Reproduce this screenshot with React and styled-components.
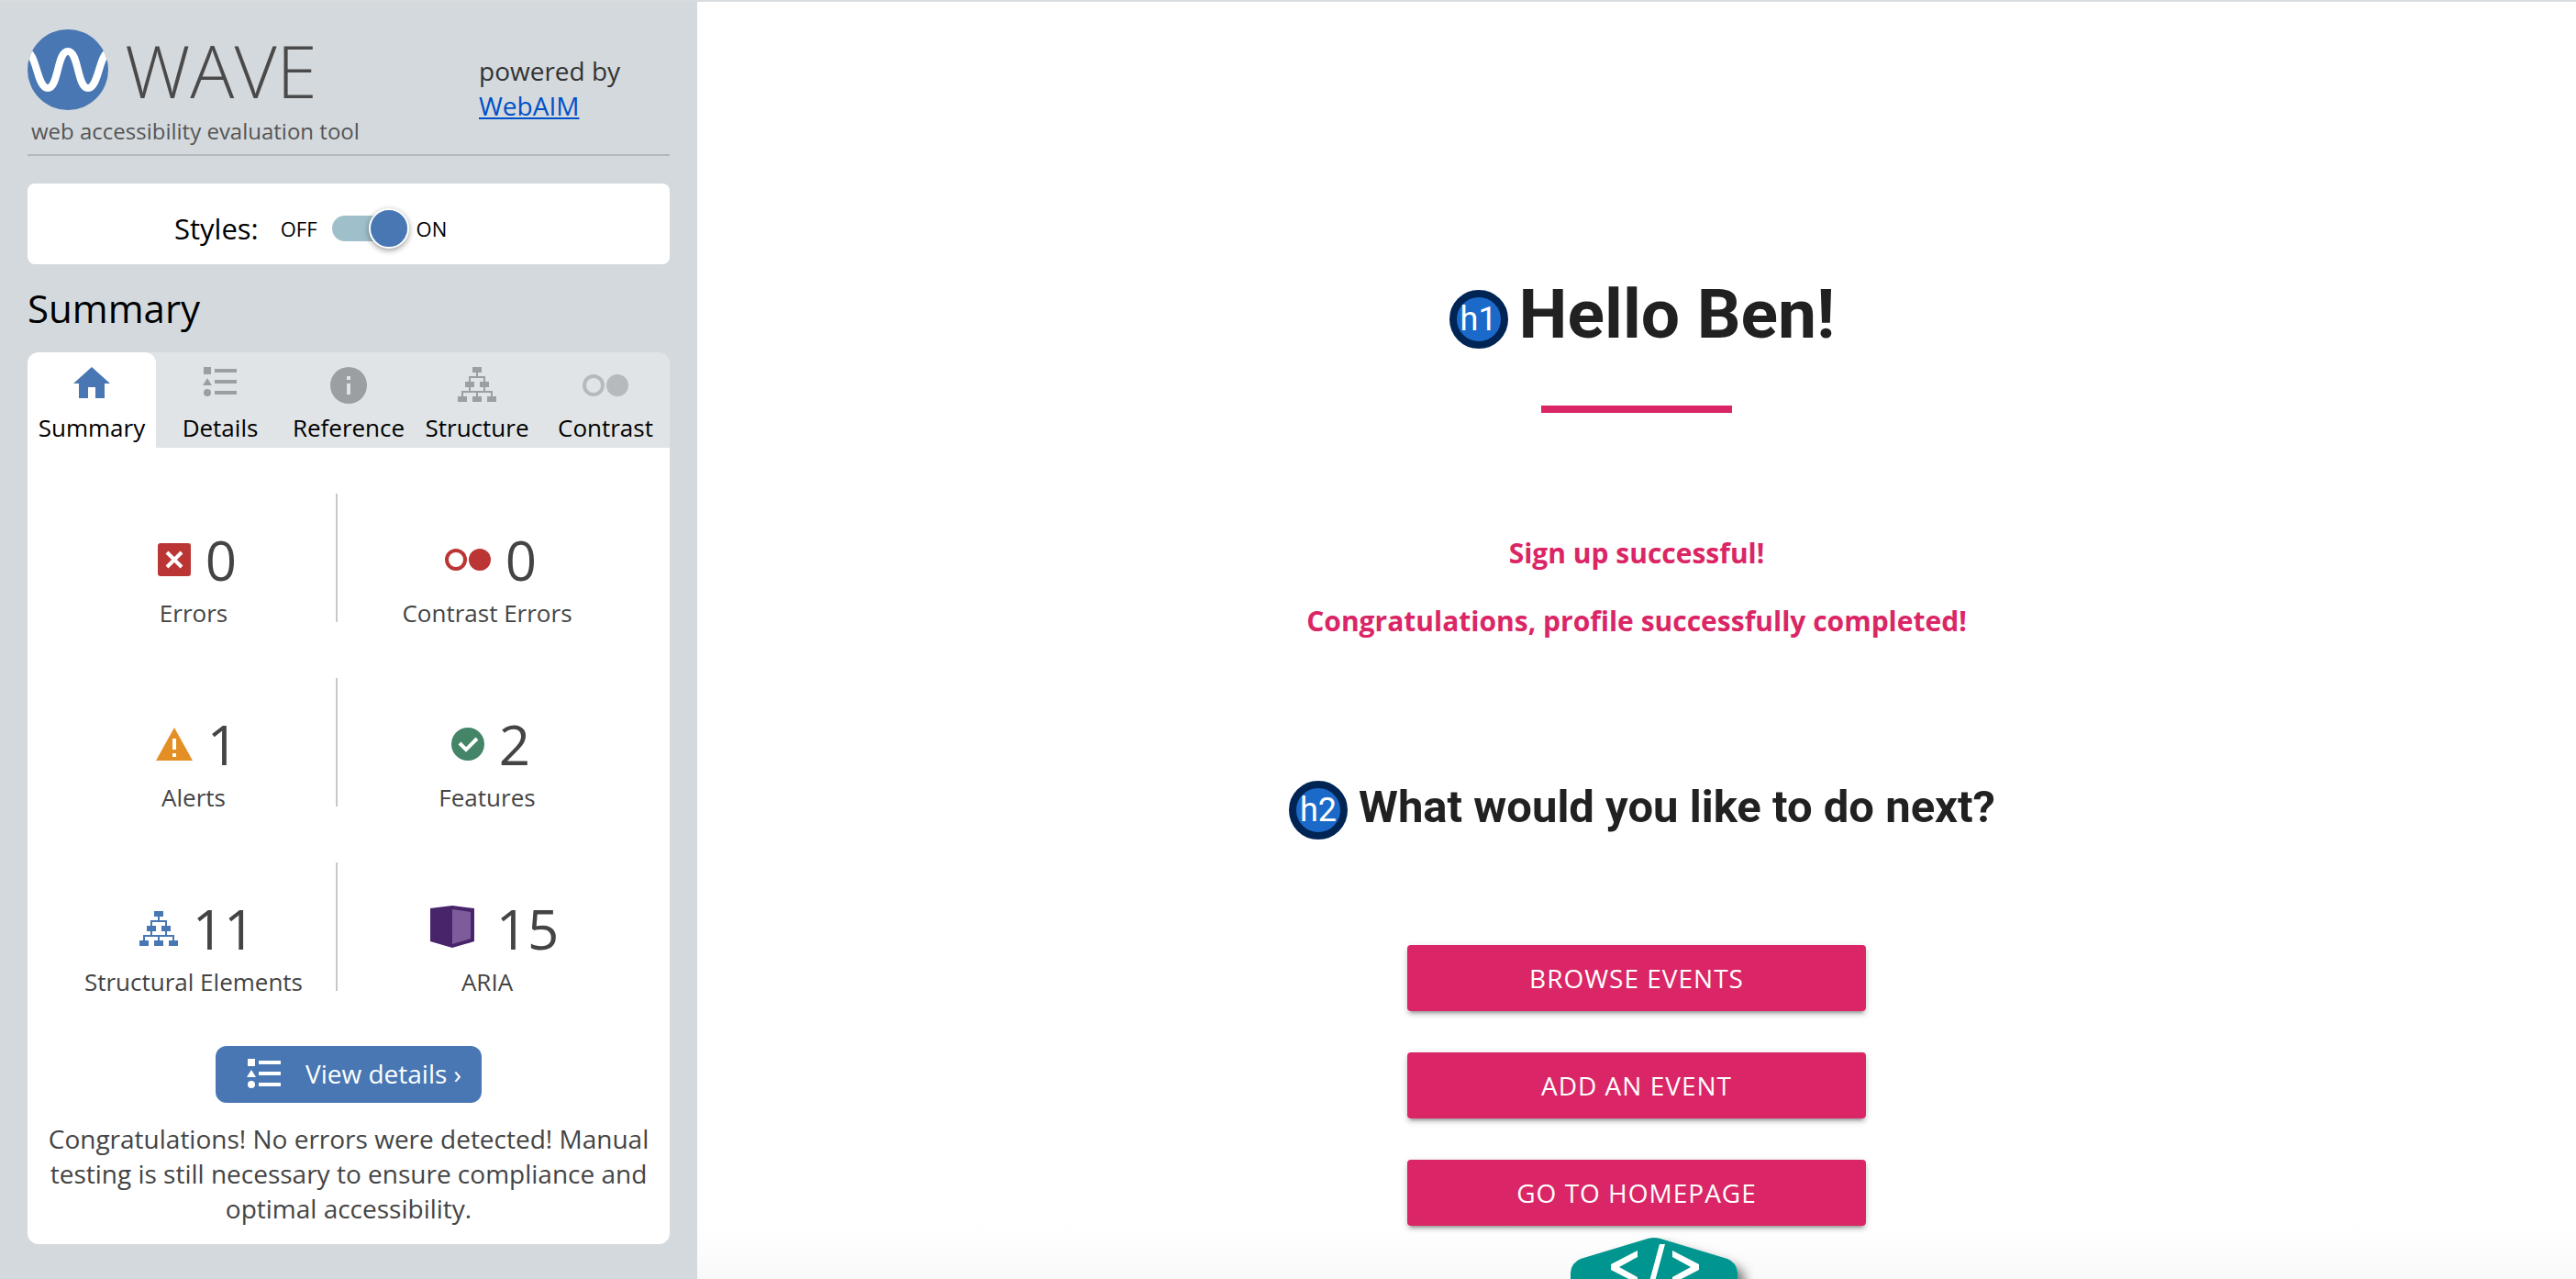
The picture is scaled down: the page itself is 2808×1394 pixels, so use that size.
import React from "react";
import styled, { createGlobalStyle } from "styled-components";

const BLUE = "#4877b3";
const PINK = "#da2666";

const GlobalStyle = createGlobalStyle`
  *, *::before, *::after { box-sizing: border-box; }
  html, body { margin: 0; }
  body {
    font-family: "Open Sans", "Noto Sans", sans-serif;
    background: #fff;
    color: #444;
  }
  h1, h2, p, ul { margin: 0; padding: 0; }
  button { font-family: inherit; cursor: pointer; }
`;

const Layout = styled.div`
  display: flex;
  height: 100vh;
  overflow: hidden;
  border-top: 2px solid #d9dcdf;
`;

const Sidebar = styled.aside`
  flex: 0 0 760px;
  padding: 30px;
  background: #d4d9dd;
`;

const Header = styled.header`
  display: flex;
  justify-content: space-between;
  height: 138px;
  border-bottom: 2px solid #b3b8bc;
`;

const Brand = styled.div`
  display: flex;
  flex-direction: column;
`;

const BrandRow = styled.div`
  display: flex;
  align-items: center;
  gap: 18px;
  height: 88px;
`;

const Wordmark = styled.span`
  font-size: 80px;
  font-weight: 300;
  line-height: 88px;
  color: #4a4a4a;
`;

const Tagline = styled.span`
  padding-left: 4px;
  font-size: 24px;
  line-height: 46px;
  color: #555;
`;

const Powered = styled.p`
  width: 208px;
  padding-top: 26px;
  font-size: 28px;
  line-height: 38px;
  color: #333;

  a { display: block; color: #0050c8; text-decoration: underline; }
`;

const StylesCard = styled.div`
  display: flex;
  align-items: center;
  height: 88px;
  margin-top: 30px;
  padding: 10px 160px 0;
  border-radius: 8px;
  background: #fff;
  color: #000;
`;

const StylesLabel = styled.span`
  font-size: 31px;
  line-height: 40px;
  margin-right: 24px;
`;

const SwitchLabel = styled.label`
  display: flex;
  align-items: center;
  gap: 8px;
  font-size: 22px;
  line-height: 40px;
`;

const Switch = styled.input`
  appearance: none;
  display: flex;
  align-items: center;
  justify-content: ${(p) => (p.defaultChecked ? "flex-end" : "flex-start")};
  width: 84px;
  height: 28px;
  margin: 0 0 0 8px;
  border-radius: 14px;
  background: linear-gradient(90deg, #9fc0ca 64px, transparent 64px);

  &::before {
    content: "";
    flex: none;
    width: 44px;
    height: 44px;
    border: 2px solid #fff;
    border-radius: 50%;
    background: ${BLUE};
    box-shadow: 0 2px 6px rgba(0, 0, 0, 0.4);
  }
`;

const PanelTitle = styled.h2`
  margin: 18px 0;
  font-size: 42px;
  font-weight: 400;
  line-height: 60px;
  color: #000;
`;

const Tabs = styled.div`
  display: grid;
  grid-template-columns: repeat(5, 1fr);
  height: 104px;
  border-radius: 12px 12px 0 0;
  background: #e0e4e6;
`;

const Tab = styled.button`
  display: flex;
  flex-direction: column;
  align-items: center;
  padding: 16px 0 0;
  border: 0;
  border-radius: 12px 12px 0 0;
  background: ${(p) => (p.$active ? "#fff" : "transparent")};
  font-size: 26px;
  line-height: 36px;
  color: #000;
`;

const TabIcon = styled.span`
  display: flex;
  justify-content: center;
  height: 48px;
  opacity: ${(p) => (p.$dim ? 0.6 : 1)};
  color: ${(p) => (p.$active ? BLUE : "#9b9fa1")};
`;

const Panel = styled.section`
  display: flex;
  flex-direction: column;
  align-items: center;
  height: 868px;
  padding: 50px 20px 0;
  border-radius: 0 0 12px 12px;
  background: #fff;
`;

const Stats = styled.ul`
  display: grid;
  grid-template-columns: 312px 328px;
  row-gap: 61px;
  && { margin-right: 12px; }
  list-style: none;
`;

const Stat = styled.li`
  display: flex;
  flex-direction: column;
  align-items: center;
  justify-content: flex-end;
  height: 140px;
  border-left: 2px solid ${(p) => (p.$divided ? "#c6c9cb" : "transparent")};
`;

const StatTop = styled.span`
  display: flex;
  align-items: center;
  gap: 16px;
  height: 96px;
  padding-left: 8px;
  font-size: 60px;
  line-height: 80px;
`;

const StatIcon = styled.span`
  display: flex;
`;

const StatLabel = styled.span`
  font-size: 26px;
  line-height: 20px;
`;

const DetailsButton = styled.button`
  display: flex;
  align-items: center;
  gap: 26px;
  height: 62px;
  margin-top: 60px;
  padding: 0 22px 2px 34px;
  border: 0;
  border-radius: 12px;
  background: ${BLUE};
  color: #fff;
  font-size: 28px;
  line-height: 38px;
`;

const Message = styled.p`
  && { margin-top: 20px; }
  font-size: 28px;
  line-height: 38px;
  text-align: center;
`;

const Main = styled.main`
  position: relative;
  flex: 1;
  display: flex;
  flex-direction: column;
  align-items: center;
  padding-top: 288px;
  overflow: hidden;
  background: linear-gradient(#fff calc(100% - 60px), #f9f9f9);
`;

const HeadingBadge = styled.span`
  display: flex;
  align-items: center;
  justify-content: center;
  width: 64px;
  height: 64px;
  border: 8px solid #002554;
  border-radius: 50%;
  background: #1b6ac9;
  color: #fff;
  font-size: 36px;
  font-weight: 400;
  line-height: 48px;
`;

const Title = styled.h1`
  display: flex;
  align-items: center;
  gap: 12px;
  padding-left: 12px;
  font-family: Roboto, sans-serif;
  font-size: 75px;
  font-weight: 700;
  line-height: 104px;
  color: #212121;

  ${HeadingBadge} { margin-top: 12px; }
`;

const Subtitle = styled(Title).attrs({ as: "h2" })`
  margin-top: 144px;
  font-size: 49px;
  line-height: 76px;

  ${HeadingBadge} { margin-top: 6px; }
`;

const Rule = styled.span`
  width: 208px;
  height: 8px;
  margin: 48px 0 132px;
  background: ${PINK};
`;

const Notice = styled.p`
  font-size: 30px;
  font-weight: 700;
  line-height: 42px;
  color: ${PINK};

  & + & { margin-top: 32px; }
`;

const Actions = styled.div`
  display: grid;
  gap: 45px;
  width: 500px;
  margin-top: 112px;
`;

const Action = styled.button`
  height: 72px;
  border: 0;
  border-radius: 4px;
  background: ${PINK};
  box-shadow: 0 6px 2px -4px rgba(0, 0, 0, 0.2), 0 4px 4px rgba(0, 0, 0, 0.14),
    0 2px 10px rgba(0, 0, 0, 0.12);
  color: #fff;
  font-size: 28px;
  letter-spacing: 1px;
  line-height: 44px;
  text-transform: uppercase;
`;

const CodeTab = styled.button`
  position: absolute;
  left: calc(50% - 72px);
  bottom: 0;
  display: flex;
  width: 200px;
  height: 46px;
  padding: 0;
  border: 0;
  background: none;
`;

const Logo = () => (
  <svg width="88" height="88" viewBox="0 0 88 88" aria-hidden="true">
    <clipPath id="disc"><circle cx="44" cy="44" r="44" /></clipPath>
    <circle cx="44" cy="44" r="44" fill={BLUE} />
    <path clipPath="url(#disc)" d="M-2 24 C10 24 10 64 22 64 C34 64 32 24 44 24 C56 24 54 64 66 64 C78 64 78 24 90 24" fill="none" stroke="#fff" strokeWidth="8" />
  </svg>
);

const HomeIcon = () => (
  <svg width="40" height="34" viewBox="0 0 40 34" fill="currentColor" aria-hidden="true">
    <path d="M20 0 40 18H34V34H24V22H16V34H6V18H0Z" />
  </svg>
);

const ListIcon = () => (
  <svg width="38" height="32" viewBox="0 0 38 32" fill="currentColor" aria-hidden="true">
    <path d="M1 0H9V8H1ZM5 12 10 20H0Z" />
    <circle cx="5" cy="28" r="4" />
    <path d="M13 2H37V6H13ZM13 14H37V18H13ZM13 26H37V30H13Z" />
  </svg>
);

const InfoIcon = () => (
  <svg width="40" height="40" viewBox="0 0 40 40" aria-hidden="true">
    <circle cx="20" cy="20" r="20" fill="currentColor" />
    <path d="M18 10H22V14H18ZM18 18H22V30H18Z" fill="#e0e4e6" />
  </svg>
);

const TreeIcon = () => (
  <svg width="42" height="38" viewBox="0 0 42 38" fill="currentColor" aria-hidden="true">
    <path d="M16 0H26V6H16ZM8 16H18V22H8ZM24 16H34V22H24ZM0 32H10V38H0ZM16 32H26V38H16ZM32 32H42V38H32Z" />
    <path d="M21 5V11M13 17V11H29V17M13 21V27M29 21V27M5 33V27H37V33M21 27V33" fill="none" stroke="currentColor" strokeWidth="2" />
  </svg>
);

const CirclesIcon = () => (
  <svg width="50" height="40" viewBox="0 0 50 40" aria-hidden="true">
    <circle cx="12" cy="20" r="10" fill="none" stroke="currentColor" strokeWidth="4" />
    <circle cx="38" cy="20" r="12" fill="currentColor" />
  </svg>
);

const ErrorIcon = () => (
  <svg width="36" height="36" viewBox="0 0 36 36" aria-hidden="true">
    <rect width="36" height="36" rx="3" fill="#bb3535" />
    <path d="M10 10 26 26M26 10 10 26" stroke="#fff" strokeWidth="4" />
  </svg>
);

const RedCircles = styled.span`
  display: flex;
  color: #bb3535;
`;

const AlertIcon = () => (
  <svg width="40" height="36" viewBox="0 0 40 36" aria-hidden="true">
    <path d="M20 0 40 36H0Z" fill="#e48f26" />
    <path d="M18 12H22V24H18ZM18 28H22V32H18Z" fill="#fff" />
  </svg>
);

const CheckIcon = () => (
  <svg width="36" height="36" viewBox="0 0 36 36" aria-hidden="true">
    <circle cx="18" cy="18" r="18" fill="#448467" />
    <path d="M9 17 16 24 28 12" fill="none" stroke="#fff" strokeWidth="4" />
  </svg>
);

const BlueTree = styled.span`
  display: flex;
  color: ${BLUE};
`;

const AriaIcon = () => (
  <svg width="64" height="50" viewBox="-8 0 64 50" aria-hidden="true">
    <path d="M0 3 24 0 48 3V39L24 46 0 39Z" fill="#48246b" />
    <path d="M24 4 44 7V36L24 42Z" fill="#7e5c9b" />
  </svg>
);

const CodeMark = () => (
  <svg width="200" height="46" viewBox="0 0 200 46" aria-hidden="true">
    <defs>
      <filter id="shade" x="-10%" y="-10%" width="130%" height="130%">
        <feDropShadow dx="8" dy="8" stdDeviation="6" floodColor="#000" floodOpacity="0.5" />
      </filter>
    </defs>
    <path filter="url(#shade)" d="M0 47V39Q1 28 11 24L84 2Q91 0 98 2L171 24Q181 28 182 39V100H0Z" fill="#05968f" />
    <path d="M73 15V22L53 33 73 44V51L44 36V30ZM111 15V22L131 33 111 44V51L140 36V30ZM97 8H103L90 56H84Z" fill="#fff" />
  </svg>
);

const TABS = [
  { name: "Summary", icon: <HomeIcon />, active: true },
  { name: "Details", icon: <ListIcon /> },
  { name: "Reference", icon: <InfoIcon /> },
  { name: "Structure", icon: <TreeIcon /> },
  { name: "Contrast", icon: <CirclesIcon />, dim: true },
];

const STATS = [
  { label: "Errors", count: 0, icon: <ErrorIcon /> },
  { label: "Contrast Errors", count: 0, icon: <RedCircles><CirclesIcon /></RedCircles> },
  { label: "Alerts", count: 1, icon: <AlertIcon /> },
  { label: "Features", count: 2, icon: <CheckIcon /> },
  { label: "Structural Elements", count: 11, icon: <BlueTree><TreeIcon /></BlueTree> },
  { label: "ARIA", count: 15, icon: <AriaIcon /> },
];

export default function App() {
  return (
    <>
      <GlobalStyle />
      <Layout>
        <Sidebar>
          <Header>
            <Brand>
              <BrandRow>
                <Logo />
                <Wordmark>WAVE</Wordmark>
              </BrandRow>
              <Tagline>web accessibility evaluation tool</Tagline>
            </Brand>
            <Powered>
              powered by <a href="#webaim">WebAIM</a>
            </Powered>
          </Header>

          <StylesCard>
            <StylesLabel>Styles:</StylesLabel>
            <SwitchLabel>
              OFF
              <Switch type="checkbox" role="switch" defaultChecked />
              ON
            </SwitchLabel>
          </StylesCard>

          <PanelTitle>Summary</PanelTitle>
          <Tabs role="tablist">
            {TABS.map((t) => (
              <Tab key={t.name} type="button" role="tab" aria-selected={!!t.active} $active={t.active}>
                <TabIcon $active={t.active} $dim={t.dim}>{t.icon}</TabIcon>
                {t.name}
              </Tab>
            ))}
          </Tabs>
          <Panel>
            <Stats>
              {STATS.map((s, i) => (
                <Stat key={s.label} $divided={i % 2 === 1}>
                  <StatTop>
                    <StatIcon>{s.icon}</StatIcon>
                    {s.count}
                  </StatTop>
                  <StatLabel>{s.label}</StatLabel>
                </Stat>
              ))}
            </Stats>
            <DetailsButton type="button">
              <ListIcon />
              View details ›
            </DetailsButton>
            <Message>
              Congratulations! No errors were detected! Manual testing is still
              necessary to ensure compliance and optimal accessibility.
            </Message>
          </Panel>
        </Sidebar>

        <Main>
          <Title>
            <HeadingBadge>h1</HeadingBadge>
            Hello Ben!
          </Title>
          <Rule />
          <Notice>Sign up successful!</Notice>
          <Notice>Congratulations, profile successfully completed!</Notice>
          <Subtitle>
            <HeadingBadge>h2</HeadingBadge>
            What would you like to do next?
          </Subtitle>
          <Actions>
            <Action type="button">Browse events</Action>
            <Action type="button">Add an event</Action>
            <Action type="button">Go to homepage</Action>
          </Actions>
          <CodeTab type="button" aria-label="Code">
            <CodeMark />
          </CodeTab>
        </Main>
      </Layout>
    </>
  );
}
